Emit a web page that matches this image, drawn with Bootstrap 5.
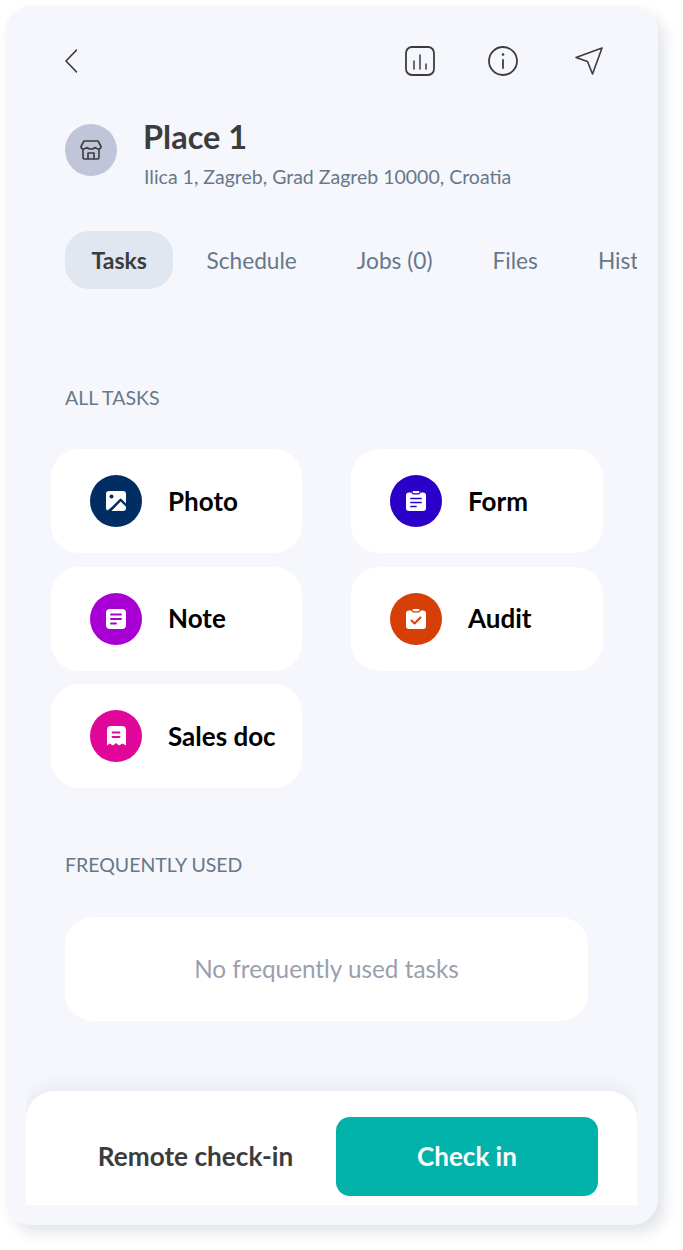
<!DOCTYPE html>
<html lang="en">
<head>
  <meta charset="UTF-8" />
  <meta name="viewport" content="width=device-width, initial-scale=1.0" />
  <title>Place 1</title>
  <link href="https://cdn.jsdelivr.net/npm/bootstrap@5.3.0/dist/css/bootstrap.min.css" rel="stylesheet" />
  <style>
    html, body {
      height: 1250px;
    }

    body {
      background: #fff;
      font-family: Lato, "Liberation Sans", sans-serif;
      overflow: hidden;
    }

    .phone {
      width: 653px;
      height: 1219px;
      margin: 6px 0 0 5px;
      padding: 38px 21px 20px;
      background: #f5f7fc;
      border-radius: 26px;
      box-shadow: 7px 8px 14px rgba(60, 70, 100, 0.14);
    }

    .top-bar {
      height: 34px;
      padding: 0 34px 0 39px;
    }

    .bar-icons {
      gap: 53px;
    }

    .bar-icons svg:last-child {
      margin-left: 4px;
    }

    .place-head {
      margin: 44px 0 0 39px;
      gap: 27px;
    }

    .place-pic {
      width: 52px;
      height: 52px;
      margin-top: 2px;
      background: #c0c5da;
    }

    .place-name {
      font-size: 32.5px;
      font-weight: 700;
      line-height: 38px;
      color: #3c3c3e;
      margin: -4px 0 0 -1px;
    }

    .place-addr {
      font-size: 19.5px;
      line-height: 24px;
      color: #66788a;
      margin: 9px 0 0;
    }

    .tab-strip {
      margin: 42px 0 0 39px;
      width: 572px;
      overflow: hidden;
      flex-wrap: nowrap;
      white-space: nowrap;
    }

    .tab-item {
      font-size: 22.7px;
      line-height: 60px;
      height: 58px;
      padding: 0 26px;
      margin-right: 8px;
      color: #66788a;
      border-radius: 24px;
      flex: none;
    }

    .tab-item.on {
      background: #e1e7f1;
      color: #3c3c3e;
      font-size: 23px;
      font-weight: 700;
      line-height: 58px;
      padding: 0 26.5px;
      margin-right: 7px;
    }

    .sect-label {
      font-size: 19.5px;
      line-height: 24px;
      color: #66788a;
      margin: 0 0 0 39px;
    }

    .sect-label.first {
      margin-top: 97px;
    }

    .sect-label.second {
      margin-top: 65px;
    }

    .task-grid {
      grid-template-columns: 251px 252px;
      column-gap: 49px;
      row-gap: 13.5px;
      margin: 39px 0 0 25px;
    }

    .task-tile {
      height: 104px;
      background: #fff;
      border-radius: 28px;
      padding-left: 39px;
      gap: 26px;
      font-size: 26px;
      font-weight: 700;
      color: #000;
    }

    .task-dot {
      width: 52px;
      height: 52px;
      flex: none;
    }

    .dot-photo { background: #002d62; }
    .dot-form { background: #2b00c8; }
    .dot-note { background: #a800d4; }
    .dot-audit { background: #d63f05; }
    .dot-sales { background: #e0069a; }

    .empty-box {
      height: 104px;
      margin: 40px 49px 0 39px;
      background: #fff;
      border-radius: 28px;
      font-size: 24.3px;
      color: #9a9fae;
    }

    .panel-clip {
      overflow: hidden;
      margin-top: 50px;
      padding-top: 20px;
    }

    .bottom-panel {
      height: 114px;
      background: #fff;
      border-radius: 28px 28px 0 0;
      box-shadow: 0 -3px 18px rgba(60, 70, 100, 0.09);
      padding: 26px 39px 9px 0;
    }

    .remote-link {
      width: 310px;
      font-size: 26.2px;
      font-weight: 700;
      color: #3c3c3e;
      padding: 0 0 0 29px;
    }

    .btn-checkin {
      width: 262px;
      height: 79px;
      background: #00b2a9;
      color: #fff;
      border: 0;
      border-radius: 14px;
      font-size: 26px;
      font-weight: 700;
    }

    .btn-checkin:hover {
      background: #00a29a;
      color: #fff;
    }
  </style>
</head>
<body>
  <div class="phone">
    <div class="top-bar d-flex align-items-center justify-content-between">
      <svg width="12" height="24" viewBox="0 0 12 24" fill="none" stroke="#3c3c3e" stroke-width="1.6" stroke-linecap="round" stroke-linejoin="round"><path d="M11.5 1 1 12l10.5 11"/></svg>
      <div class="bar-icons d-flex align-items-center">
        <svg width="30" height="30" viewBox="0 0 30 30" fill="none" stroke="#3c3c3e" stroke-width="1.8" stroke-linecap="round"><rect x="1" y="1" width="28" height="28" rx="6"/><path d="M9 15v8M15 9v14M21 18v5" stroke-width="1.5"/></svg>
        <svg width="30" height="30" viewBox="0 0 30 30" fill="none" stroke="#3c3c3e" stroke-width="1.8" stroke-linecap="round"><circle cx="15" cy="15" r="14"/><path d="M15 14v8"/><circle cx="15" cy="8.500" r="1.300" fill="#3c3c3e" stroke="none"/></svg>
        <svg width="28" height="28" viewBox="0 0 28 28" fill="none" stroke="#3c3c3e" stroke-width="1.6" stroke-linejoin="round" stroke-linecap="round"><path d="M27 1 1 10.500l11.500 4 5 12.500z"/></svg>
      </div>
    </div>

    <div class="place-head d-flex align-items-start">
      <div class="place-pic rounded-circle d-flex align-items-center justify-content-center">
        <svg width="22" height="20" viewBox="0 0 22 20" fill="none" stroke="#3c3c3e" stroke-width="1.6" stroke-linejoin="round"><path d="M4 1h14l3 5.500c0 1.600-1.200 2.500-2.500 2.500S16 8 15 7.500C14.400 8.500 12.500 9 11 9S7.600 8.500 7 7.500C6 8 4.800 9 3.500 9S1 8.100 1 6.500z"/><path d="M3 9v8.500c0 .8.500 1.500 1.500 1.500h13c1 0 1.500-.7 1.500-1.500V9"/><path d="M8 19v-6h6v6"/></svg>
      </div>
      <div>
        <h1 class="place-name">Place 1</h1>
        <p class="place-addr">Ilica 1, Zagreb, Grad Zagreb 10000, Croatia</p>
      </div>
    </div>

    <div class="tab-strip d-flex">
      <div class="tab-item on">Tasks</div>
      <div class="tab-item">Schedule</div>
      <div class="tab-item">Jobs (0)</div>
      <div class="tab-item">Files</div>
      <div class="tab-item">History</div>
    </div>

    <p class="sect-label first">ALL TASKS</p>

    <div class="task-grid d-grid">
      <div class="task-tile d-flex align-items-center">
        <div class="task-dot dot-photo rounded-circle d-flex align-items-center justify-content-center">
          <svg width="20" height="20" viewBox="0 0 20 20"><path fill="#fff" d="M3 0h14a3 3 0 0 1 3 3v9.500L15.500 8a1.200 1.200 0 0 0-1.700 0L6 15.800l-4.500 3.700A3 3 0 0 1 0 17V3a3 3 0 0 1 3-3z"/><path fill="#fff" d="M14.700 10.500 20 15.800V17a3 3 0 0 1-3 3H5.500z"/><circle cx="5.500" cy="5.500" r="2" fill="#002d62"/></svg>
        </div>
        Photo
      </div>
      <div class="task-tile d-flex align-items-center">
        <div class="task-dot dot-form rounded-circle d-flex align-items-center justify-content-center">
          <svg width="20" height="20" viewBox="0 0 20 20"><path fill="#fff" d="M3 1.500h2.500a2 2 0 0 0 2 2h5a2 2 0 0 0 2-2H17a3 3 0 0 1 3 3V17a3 3 0 0 1-3 3H3a3 3 0 0 1-3-3V4.500a3 3 0 0 1 3-3z"/><rect x="6.500" y="0" width="7" height="2.200" rx="1.100" fill="#fff"/><path d="M5 7.500h10M5 11.500h10M5 15.500h5" stroke="#2b00c8" stroke-width="1.700" stroke-linecap="round"/></svg>
        </div>
        Form
      </div>
      <div class="task-tile d-flex align-items-center">
        <div class="task-dot dot-note rounded-circle d-flex align-items-center justify-content-center">
          <svg width="20" height="20" viewBox="0 0 20 20"><rect width="20" height="20" rx="4" fill="#fff"/><path d="M5 5.500h10M5 10h10M5 14.500h5" stroke="#a800d4" stroke-width="1.800" stroke-linecap="round"/></svg>
        </div>
        Note
      </div>
      <div class="task-tile d-flex align-items-center">
        <div class="task-dot dot-audit rounded-circle d-flex align-items-center justify-content-center">
          <svg width="20" height="20" viewBox="0 0 20 20"><path fill="#fff" d="M3 1.500h2.500a2 2 0 0 0 2 2h5a2 2 0 0 0 2-2H17a3 3 0 0 1 3 3V17a3 3 0 0 1-3 3H3a3 3 0 0 1-3-3V4.500a3 3 0 0 1 3-3z"/><rect x="6.500" y="0" width="7" height="2.200" rx="1.100" fill="#fff"/><path d="m5.500 11.500 3 3 6-6" fill="none" stroke="#d63f05" stroke-width="1.900" stroke-linecap="round" stroke-linejoin="round"/></svg>
        </div>
        Audit
      </div>
      <div class="task-tile d-flex align-items-center">
        <div class="task-dot dot-sales rounded-circle d-flex align-items-center justify-content-center">
          <svg width="20" height="20" viewBox="0 0 20 20"><path fill="#fff" d="M4 0h12a4 4 0 0 1 4 4v15.500l-3.500-2-3.500 2-3-2.500-3 2.500-3.500-2-2.500 2V4a4 4 0 0 1 4-4z"/><path d="M6.500 6.500h7M6.500 11h7" stroke="#e0069a" stroke-width="1.800" stroke-linecap="round"/></svg>
        </div>
        Sales doc
      </div>
    </div>

    <p class="sect-label second">FREQUENTLY USED</p>

    <div class="empty-box d-flex align-items-center justify-content-center">No frequently used tasks</div>

    <div class="panel-clip">
      <div class="bottom-panel d-flex align-items-stretch justify-content-between">
        <div class="remote-link d-flex align-items-center justify-content-center">Remote check-in</div>
        <button type="button" class="btn btn-checkin">Check in</button>
      </div>
    </div>
  </div>
  <script src="https://cdn.jsdelivr.net/npm/bootstrap@5.3.0/dist/js/bootstrap.bundle.min.js"></script>
</body>
</html>
